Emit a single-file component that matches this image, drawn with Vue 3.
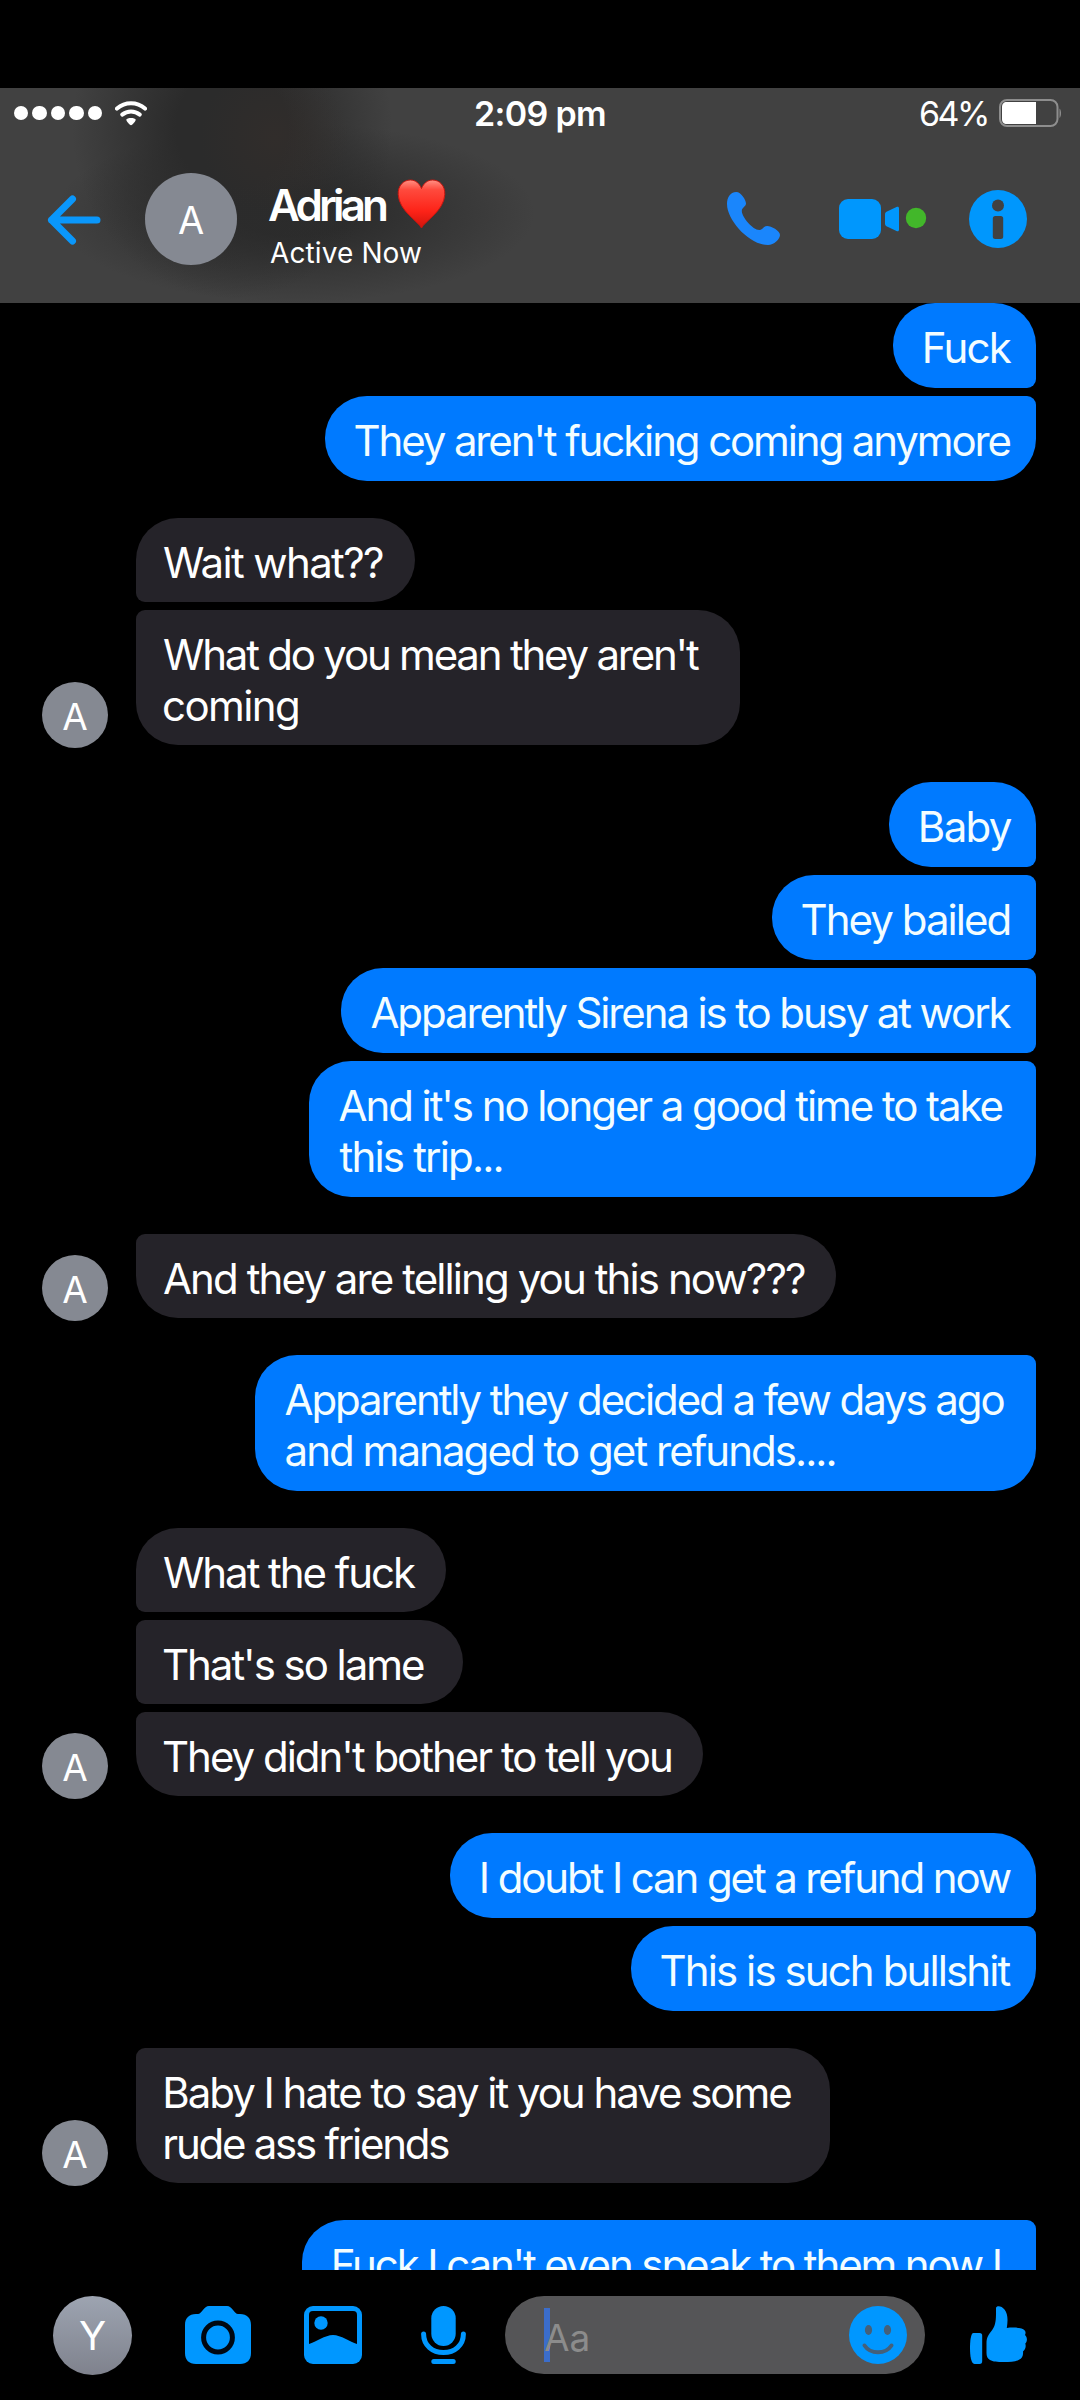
<script setup>
const groups = [
  { mine: true, items: [
    { w: 143, lines: [['Fuck', 87]] },
    { w: 711, lines: [["They aren't fucking coming anymore", 655]] },
  ] },
  { mine: false, items: [
    { w: 279, lines: [['Wait what??', 219]] },
    { w: 604, lines: [["What do you mean they aren't", 535], ['coming', 134]] },
  ] },
  { mine: true, items: [
    { w: 147, lines: [['Baby', 91]] },
    { w: 264, lines: [['They bailed', 207]] },
    { w: 695, lines: [['Apparently Sirena is to busy at work', 640]] },
    { w: 727, lines: [["And it's no longer a good time to take", 663], ['this trip...', 162]] },
  ] },
  { mine: false, square: true, items: [
    { w: 700, lines: [['And they are telling you this now???', 641]] },
  ] },
  { mine: true, square: true, items: [
    { w: 781, lines: [['Apparently they decided a few days ago', 719], ['and managed to get refunds....', 549]] },
  ] },
  { mine: false, items: [
    { w: 310, lines: [['What the fuck', 252]] },
    { w: 327, lines: [["That's so lame", 260]] },
    { w: 567, lines: [["They didn't bother to tell you", 507]] },
  ] },
  { mine: true, items: [
    { w: 586, lines: [['I doubt I can get a refund now', 529]] },
    { w: 405, lines: [['This is such bullshit', 349]] },
  ] },
  { mine: false, square: true, items: [
    { w: 694, lines: [['Baby I hate to say it you have some', 626], ['rude ass friends', 284]] },
  ] },
  { mine: true, square: true, items: [
    { w: 734, lines: [["Fuck I can't even speak to them now I", 666], ['', 0]] },
  ] },
]

// Tracks a line of text so its glyphs span the given width, flush with the text edge.
const ctx = document.createElement('canvas').getContext('2d')
function track(text, width, font = '400 42px Inter') {
  if (!text) return {}
  ctx.font = font
  const m = ctx.measureText(text)
  const ink = m.actualBoundingBoxLeft + m.actualBoundingBoxRight
  const stem = /^[FBIr]/.test(text) ? 1.3 : 0
  return {
    letterSpacing: ((width - ink) / (text.length - 1)).toFixed(3) + 'px',
    marginLeft: (m.actualBoundingBoxLeft + stem).toFixed(2) + 'px',
  }
}
</script>

<template>
  <div class="phone">
    <header class="top">
      <div class="status">
        <div class="signal"><i v-for="n in 5" :key="n"></i></div>
        <svg class="wifi" width="32" height="25" viewBox="0 0 32 25">
          <path d="M2 7.6C10 .6 22 .6 30 7.6" fill="none" stroke="#fff" stroke-width="4" stroke-linecap="round" />
          <path d="M7.2 13.6c5.2-4.3 12.4-4.3 17.6 0" fill="none" stroke="#fff" stroke-width="4" stroke-linecap="round" />
          <path d="M11.3 18.6c.5-2.1 8.9-2.1 9.4 0 .2 1.4-3.3 5.6-4.7 5.600s-4.900-4.200-4.700-5.600z" fill="#fff" />
        </svg>
        <div class="time"><span :style="track('2:09 pm', 129, '600 34px Inter')">2:09 pm</span></div>
        <div class="pct"><span :style="track('64%', 66, '400 34px Inter')">64%</span></div>
        <svg class="battery" width="63" height="28" viewBox="0 0 63 28">
          <rect x="1" y="1" width="57.5" height="26" rx="7" fill="none" stroke="#8e8e8e" stroke-width="2" />
          <path d="M8 3h29v22H8c-3.500 0-5-2-5-5V8c0-3 1.500-5 5-5z" fill="#fff" />
          <path d="M60.500 9.500c2 1.500 2 8 0 9.500z" fill="#8e8e8e" />
        </svg>
      </div>
      <div class="bar">
        <svg class="back" width="54" height="50" viewBox="0 0 54 50">
          <path d="M25.500 4 4.500 25l21 21M4.500 25H50" fill="none" stroke="#0a97fb" stroke-width="7" stroke-linecap="round" stroke-linejoin="round" />
        </svg>
        <div class="avatar big">A</div>
        <div class="who">
          <div class="name">
            <span :style="track('Adrian', 117, '580 44px Inter')">Adrian</span>
            <svg class="heart" width="49" height="50" viewBox="0 0 49 50">
              <defs>
                <linearGradient id="hg" x1="0" y1="0" x2="0" y2="1">
                  <stop offset="0" stop-color="#ff9184" /><stop offset=".2" stop-color="#ff4a3d" />
                  <stop offset=".65" stop-color="#fd2318" /><stop offset="1" stop-color="#d0140c" />
                </linearGradient>
              </defs>
              <path d="M24.500 49C21 42 2 32 1.200 15.500.8 6.500 6.500 1 13.500 1c5 0 9 3.500 11 8.500C26.500 4.500 30.500 1 35.500 1c7 0 12.700 5.500 12.300 14.500C47 32 28 42 24.500 49z" fill="url(#hg)" stroke="#c4160f" stroke-width="1" />
            </svg>
          </div>
          <div class="active"><span :style="track('Active Now', 151, '400 28px Inter')">Active Now</span></div>
        </div>
        <div class="actions">
          <svg width="54" height="54" viewBox="0 0 54 54">
            <path d="M9.300 0C14 0 19 8 19 11.500c0 3-4.200 4-4.200 7.500 0 6 11 19 17.500 19 3.500 0 4-4 8-4C44 34 53 38.500 53 43c0 4-6 10-12 10C22 53 0 28 0 12 0 6 3 0 9.300 0z" fill="#1a86fc" />
          </svg>
          <svg class="video" width="88" height="40" viewBox="0 0 88 40">
            <rect width="42" height="40" rx="9" fill="#0097fd" />
            <path d="M48 12.500 57.500 8C59 7.400 60 8 60 9.500v21c0 1.500-1 2.200-2.500 1.500L48 27.500c-1.500-.8-2-1.700-2-3V15.500c0-1.300.5-2.200 2-3z" fill="#0097fd" />
            <circle cx="77" cy="19" r="10.200" fill="#42b72a" />
          </svg>
          <svg class="info" width="58" height="58" viewBox="0 0 58 58">
            <circle cx="29" cy="29" r="29" fill="#0097fd" />
            <circle cx="29" cy="15.500" r="6" fill="#414141" />
            <rect x="23.800" y="26" width="10.400" height="23" rx="2.500" fill="#414141" />
          </svg>
        </div>
      </div>
    </header>

    <main class="chat">
      <section v-for="(g, i) in groups" :key="i" class="group" :class="[g.mine ? 'mine' : 'theirs', { square: g.square }]">
        <div v-for="(m, j) in g.items" :key="j" class="bubble" :style="{ width: m.w + 'px' }">
          <div v-for="(l, k) in m.lines" :key="k" class="line"><span :style="track(l[0], l[1])">{{ l[0] }}</span></div>
        </div>
        <div v-if="!g.mine" class="avatar small">A</div>
      </section>
    </main>

    <footer class="composer">
      <div class="avatar me">Y</div>
      <svg class="camera" width="66" height="58" viewBox="0 0 66 58">
        <path d="M24 0h18c5 0 7.500 8 11 8h2c7 0 11 4 11 11v28c0 7-4 11-11 11H11C4 58 0 54 0 47V19C0 12 4 8 11 8h2c3.500 0 6-8 11-8z" fill="#0097ff" />
        <circle cx="33" cy="31.500" r="14.400" fill="none" stroke="#000812" stroke-width="5" />
      </svg>
      <svg class="gallery" width="58" height="58" viewBox="0 0 58 58">
        <rect width="58" height="58" rx="9" fill="#0097ff" />
        <path d="M9 5h40c3 0 4 1.500 4 4v29C46 36 37 29 29 29S12 36 5 38V9c0-2.500 1-4 4-4z" fill="#000" />
        <circle cx="17" cy="17" r="6.700" fill="#0097ff" />
      </svg>
      <svg class="mic" width="45" height="58" viewBox="0 0 45 58">
        <rect x="10.300" width="24.400" height="40" rx="12.200" fill="#0097ff" />
        <path d="M2.600 28c0 11.500 9 18.600 19.900 18.600S42.400 39.500 42.400 28" fill="none" stroke="#0097ff" stroke-width="5" stroke-linecap="round" />
        <path d="M12.800 55.500h19.400" stroke="#0097ff" stroke-width="5" stroke-linecap="round" />
      </svg>
      <div class="field">
        <i class="caret"></i>
        <span class="hint">Aa</span>
        <svg class="smile" width="58" height="58" viewBox="0 0 58 58">
          <circle cx="29" cy="29" r="29" fill="#0097ff" />
          <ellipse cx="19.500" cy="24" rx="3.600" ry="4.900" fill="#45607a" />
          <ellipse cx="38.500" cy="24" rx="3.600" ry="4.900" fill="#45607a" />
          <path d="M15.500 39.500c6 9 21 9 27 0" fill="none" stroke="#45607a" stroke-width="4" stroke-linecap="round" />
        </svg>
      </div>
      <svg class="thumb" width="58" height="58" viewBox="0 0 58 58">
        <path d="M3.500 27h6c2 0 2.700 1 2.700 2.700V55c0 2-.7 3-2.700 3H4.500C1 58 0 49 0 42s.8-15 3.500-15z" fill="#0097ff" />
        <path d="M26 2c.5-3 6-2 8.500 1.500C38 8 38 14 36.800 22c5-.8 11-.5 14.700.5 3.500 1 5 3.500 3.500 6.500 2.500 2.500 2.500 6 .3 8.500 1 3.500 0 6-2.300 8 .5 4-1 7-4 8.300C45.500 56 40 56 34 56c-7 0-11-.3-14-2-2.500-1.500-3.500-3.500-3.500-7V37c0-6 2.500-9 6-13.500C26.500 18 26 10 26 2z" fill="#0097ff" />
      </svg>
    </footer>
  </div>
</template>

<style>
body { background: #000; }
</style>

<style scoped>
.phone {
  width: 1080px; height: 2400px; box-sizing: border-box; padding-top: 88px;
  display: flex; flex-direction: column; overflow: hidden;
  background: #000; color: #fff; font-family: Inter, "Liberation Sans", sans-serif;
}
svg { display: block; flex: none; }
span { display: inline-block; white-space: pre; }
.top {
  height: 215px; flex: none;
  background:
    radial-gradient(ellipse 75px 75px at 275px 50px, rgba(58, 48, 43, .4), transparent),
    radial-gradient(ellipse 160px 170px at 232px 40px, #2b2b2b 35%, rgba(43, 43, 43, 0)),
    radial-gradient(ellipse 240px 90px at 295px 125px, rgba(43, 43, 43, .95) 25%, rgba(43, 43, 43, 0)),
    #414141;
}
.status { display: flex; align-items: center; height: 50px; padding-left: 14px; }
.signal { display: flex; gap: 4px; width: 101px; }
.signal i { width: 14.400px; height: 14.400px; border-radius: 50%; background: #fff; }
.time { margin: 2px 0 0 329px; width: 445px; font-size: 34px; font-weight: 600; line-height: 50px; }
.pct { margin-top: 2px; width: 78px; font-size: 34px; line-height: 50px; }
.bar { display: flex; align-items: flex-start; height: 165px; }
.back { margin: 57px 0 0 47px; }
.avatar {
  border-radius: 50%; flex: none; background: #858992; color: #fff;
  display: flex; align-items: center; justify-content: center;
}
.big { width: 92px; height: 92px; margin: 35px 0 0 44px; font-size: 38px; padding-top: 2px; box-sizing: border-box; }
.who { width: 458px; padding: 42px 0 0 32px; box-sizing: border-box; }
.name { display: flex; font-size: 44px; font-weight: 580; line-height: 50px; width: 177px; justify-content: space-between; }
.heart { margin-top: -1px; }
.active { font-size: 28px; line-height: 34px; margin-top: 6px; padding-left: 1px; }
.actions { display: flex; align-items: center; margin-top: 52px; height: 58px; margin-left: 32px; }
.video { margin-left: 58px; }
.info { margin-left: 42px; }

.chat { height: 1967px; flex: none; overflow: hidden; display: flex; flex-direction: column; gap: 37px; }
.group { display: flex; flex-direction: column; gap: 8px; position: relative; flex: none; }
.mine { align-items: flex-end; padding-right: 44px; }
.theirs { align-items: flex-start; padding-left: 136px; }
.bubble { box-sizing: border-box; font-size: 42px; }
.line { height: 51px; line-height: 51px; }
.mine .bubble { background: #007aff; color: #f3fdff; padding: 19px 0 15px 30.500px; border-radius: 42px 9px 9px 42px; }
.theirs .bubble { background: #252329; padding: 19px 0 14px 28px; border-radius: 9px 42px 42px 9px; }
.mine:not(.square) .bubble:first-child { border-top-right-radius: 42px; }
.mine .bubble:last-of-type { border-bottom-right-radius: 42px; }
.theirs:not(.square) .bubble:first-child { border-top-left-radius: 42px; }
.theirs .bubble:nth-last-child(2) { border-bottom-left-radius: 42px; }
.small { position: absolute; left: 42px; bottom: -3px; width: 66px; height: 66px; font-size: 37px; padding-top: 3px; box-sizing: border-box; }

.composer { display: flex; align-items: center; flex: none; height: 130px; padding-left: 53px; }
.me { width: 79px; height: 79px; font-size: 40px; background: linear-gradient(#9da4b1, #7f828d); padding-top: 1px; box-sizing: border-box; }
.camera { margin-left: 53px; }
.gallery { margin-left: 53px; }
.mic { margin-left: 59px; }
.field { position: relative; display: flex; align-items: center; width: 420px; height: 78px; margin-left: 39px; border-radius: 39px; background: #555557; }
.caret { position: absolute; left: 39px; top: 12px; width: 5.500px; height: 54px; background: #3b6dcb; }
.hint { position: relative; margin: 4px 0 0 39px; width: 305px; font-size: 37px; color: #8c8c8c; }
.smile { margin-top: -1px; }
.thumb { margin-left: 45px; }
</style>
